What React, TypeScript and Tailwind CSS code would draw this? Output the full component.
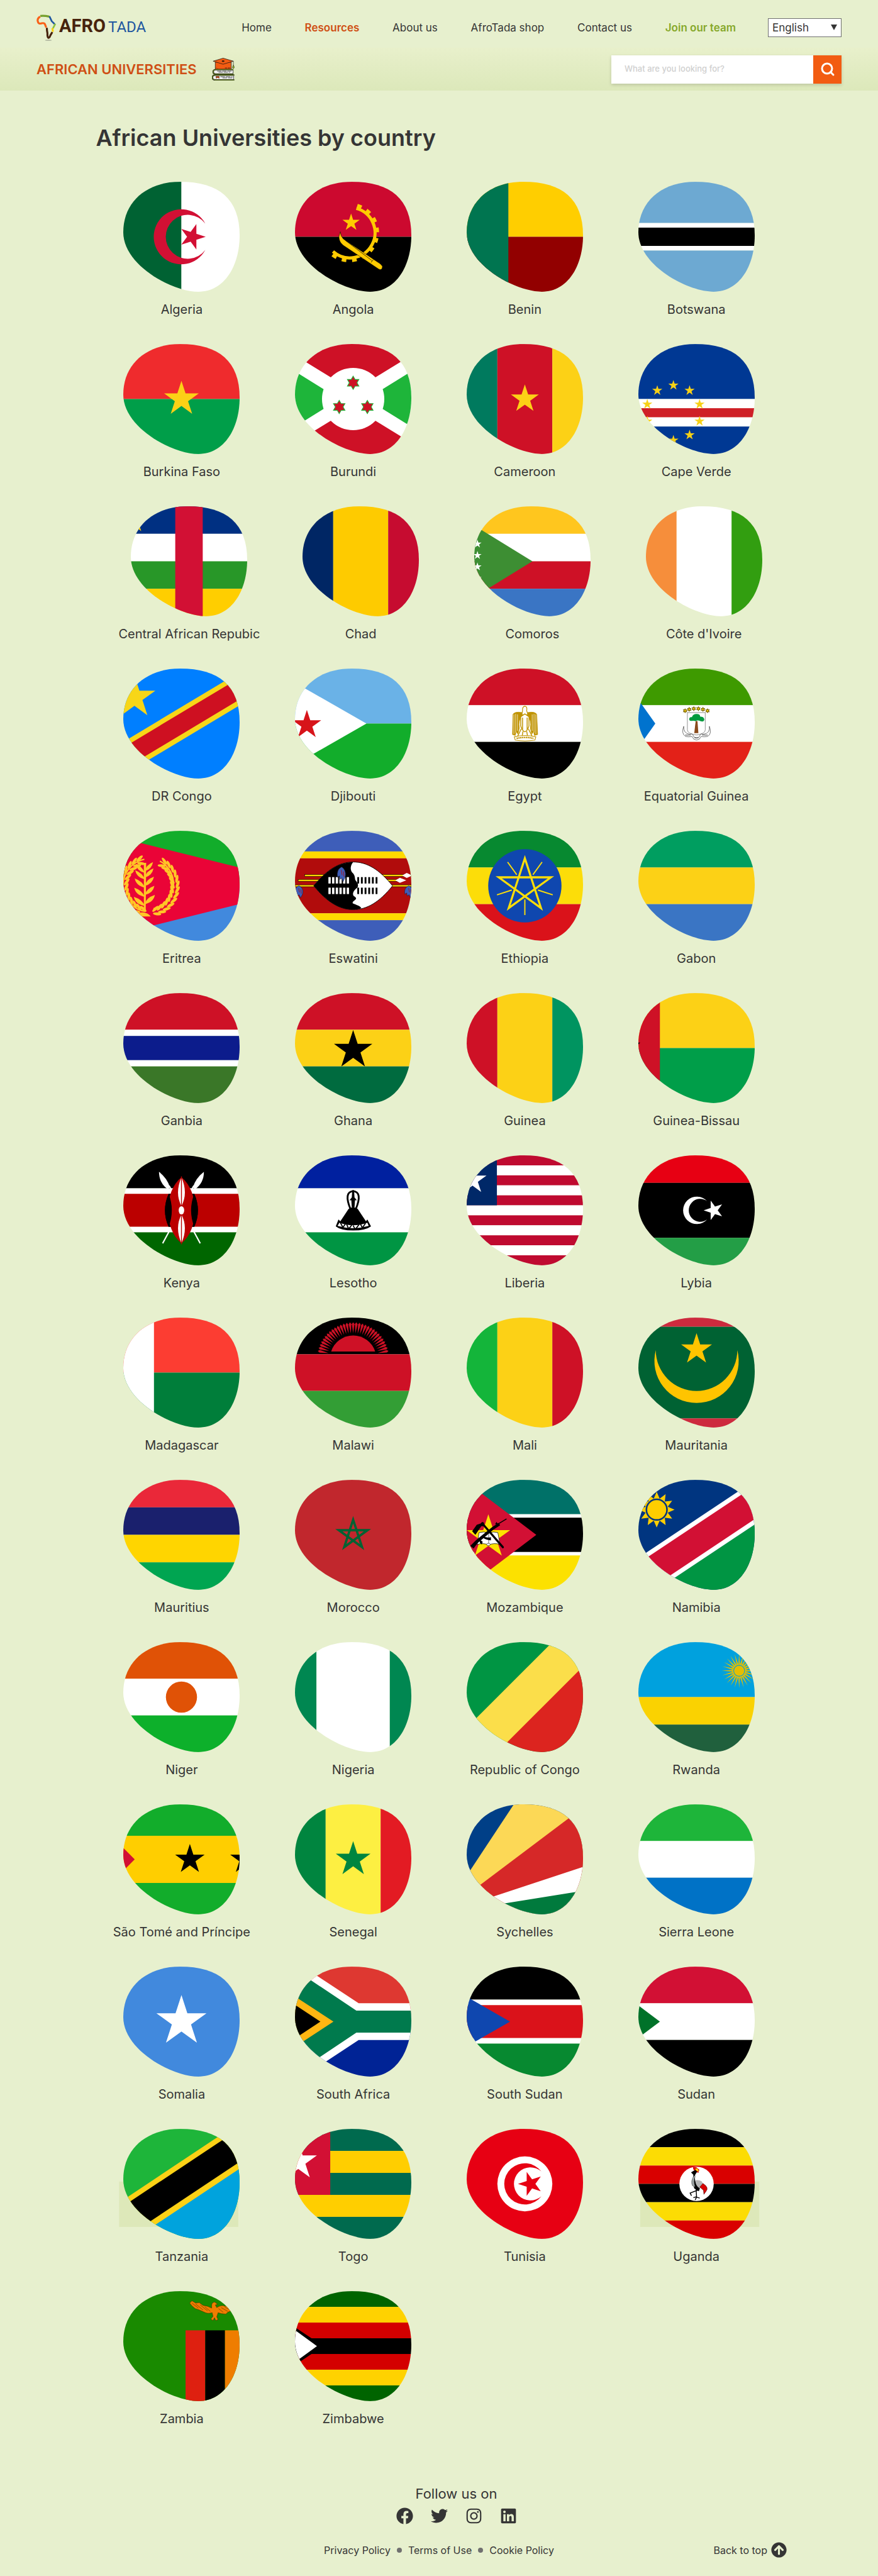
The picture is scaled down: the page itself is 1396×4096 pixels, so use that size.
import React, { useId } from 'react';
import { Search } from 'lucide-react';
import { FaArrowCircleUp, FaFacebook, FaInstagram, FaLinkedin, FaTwitter } from 'react-icons/fa';

/* ---------- drawing helpers (all flags share a 254 x 240 canvas) ---------- */

const BLOB =
  'M0,110 C0,44 50,0 124,0 C209,0 254,38 254,117 C254,183 221,240 164,240 C108,240 0,183 0,110 Z';

const polar = (cx: number, cy: number, r: number, deg: number) => {
  const a = (deg * Math.PI) / 180;
  return `${(cx + r * Math.cos(a)).toFixed(2)},${(cy + r * Math.sin(a)).toFixed(2)}`;
};

function starPoints(cx: number, cy: number, r: number, n = 5, inner = 0.382, start = -90) {
  return Array.from({ length: n * 2 }, (_, i) =>
    polar(cx, cy, i % 2 ? r * inner : r, start + (i * 180) / n),
  ).join(' ');
}

type StarProps = {
  x: number;
  y: number;
  r: number;
  c: string;
  n?: number;
  inner?: number;
  start?: number;
  stroke?: string;
};

const Star = ({ x, y, r, c, n, inner, start, stroke }: StarProps) => (
  <polygon points={starPoints(x, y, r, n, inner, start)} fill={c} stroke={stroke} strokeWidth={stroke ? 1.5 : 0} />
);

const Poly = ({ p, c }: { p: string; c: string }) => <polygon points={p} fill={c} />;

/* Horizontal bands: [end y, colour] */
const H = ({ b }: { b: [number, string][] }) => (
  <>
    {b.map(([end, c], i) => {
      const y = i ? b[i - 1][0] : 0;
      return <rect key={i} x={0} y={y} width={254} height={end - y} fill={c} />;
    })}
  </>
);

/* Vertical bands: [end x, colour] */
const V = ({ b }: { b: [number, string][] }) => (
  <>
    {b.map(([end, c], i) => {
      const x = i ? b[i - 1][0] : 0;
      return <rect key={i} x={x} y={0} width={end - x} height={240} fill={c} />;
    })}
  </>
);

/* Triangle on the hoist side */
const Hoist = ({ apex, half, c }: { apex: number; half: number; c: string }) => (
  <polygon points={`-10,${120 - half} ${apex},120 -10,${120 + half}`} fill={c} />
);

/* Diagonal band between the lines y = a1 - kx and y = a2 - kx */
const Diag = ({ a1, a2, k, c }: { a1: number; a2: number; k: number; c: string }) => (
  <polygon
    points={`-10,${a1 + 10 * k} 270,${a1 - 270 * k} 270,${a2 - 270 * k} -10,${a2 + 10 * k}`}
    fill={c}
  />
);

const pentagram = (cx: number, cy: number, r: number) =>
  [0, 2, 4, 1, 3].map((i) => polar(cx, cy, r, -90 + i * 72)).join(' ');

const range = (n: number) => Array.from({ length: n }, (_, i) => i);

const W = '#ffffff';
const K = '#000000';

/* ---------- emblems ---------- */

const AngolaEmblem = () => (
  <g>
    <g fill="none" stroke="#ffcb00">
      <path d="M134,58 A55,55 0 1 1 83,152" strokeWidth={7} />
      <path d="M136,52 A61,61 0 1 1 78,156" strokeWidth={8} strokeDasharray="10 12.5" />
    </g>
    <path
      d="M99,109 L96,119 C96,131 102,137 112,143 L182,190 Q190,195 191,185 Q189,180 180,175 L106,125 Q99,118 99,109 Z"
      fill="#ffcb00"
      stroke={K}
      strokeWidth={0.8}
    />
    <path d="M110,128 L168,172 M166,176 l5,-6" stroke={K} strokeWidth={1} />
    <Star x={122.5} y={89} r={19.8} c="#ffcb00" />
  </g>
);

const EgyptEagle = () => (
  <g fill="#c09300" stroke="#c09300">
    <path d="M122,92 Q121,83 127,82 Q133,83 131,92 L134,101 L120,101 Z" fill={W} strokeWidth={1.6} />
    <path d="M121,96 Q105,93 101,100 L100,144 L106,146 L108,138 L112,143 L115,130 Q112,112 121,104 Z" strokeWidth={1} />
    <path d="M133,96 Q149,93 153,100 L155,144 L148,146 L146,138 L142,143 L139,130 Q142,112 133,104 Z" strokeWidth={1} />
    <path d="M103,100 V143 M107,99 V140 M111,100 V136 M151,100 V143 M147,99 V140 M143,100 V136" stroke={W} strokeWidth={1} />
    <path d="M118,105 L127,99 L136,105 L136,125 Q133,136 127,138 Q121,136 118,125 Z" fill={W} strokeWidth={2} />
    <path d="M122,107 V133 M132,107 V133" fill="none" strokeWidth={2} />
    <path d="M119,132 L110,150 L119,148 M135,132 L144,150 L135,148 M123,137 L121,148 M131,137 L133,148" fill="none" strokeWidth={2} />
    <path d="M104,149 Q127,143 151,149 L149,156 Q127,160 106,156 Z" fill={W} strokeWidth={1.5} />
    <path d="M109,152.500 Q127,148 146,152.500" fill="none" strokeWidth={3} strokeDasharray="3 1" />
  </g>
);

const GuineaEmblem = () => (
  <g>
    {[102, 111, 121, 131, 141, 151].map((x, i) => (
      <Star key={x} x={x} y={[92, 89, 87.5, 87.5, 89, 92][i]} r={4} c="#ffd700" n={6} inner={0.55} stroke="#7a6300" />
    ))}
    <path d="M107,96 H146 V134 Q146,142 127,145 Q107,142 107,134 Z" fill={W} stroke="#666" strokeWidth={1} />
    <path d="M125,115 L127,114 L129,115 L131,141 H122 Z" fill="#8a4b1c" />
    <path d="M117,114 q-7,1 -6,-5 q1,-4 6,-3 q2,-7 10,-7 q8,0 8,6 q8,0 9,6 q-1,6 -8,4 q-8,-4 -11,0 q-4,-2 -8,-1 Z" fill="#009a3d" />
    <path d="M99,126 Q98,141 111,143 H118 L122,150 Q127,154 132,150 L136,143 H143 Q157,141 155,126 Q161,143 151,148 Q143,150 137,148 L133,154 Q127,158 121,154 L117,148 Q109,150 103,148 Q93,142 99,126 Z" fill={W} stroke="#444" strokeWidth={1} />
    <path d="M103,145 H114 M140,145 H151 M123,151 H131" stroke="#333" strokeWidth={2} strokeDasharray="1.5 1" />
  </g>
);

const EritreaWreath = () => (
  <g fill="#ffc726">
    <path d="M66,170 A56,56 0 0 0 80,66 M48,176 A58,58 0 0 1 46,62" fill="none" stroke="#ffc726" strokeWidth={3} />
    {range(13).map((i) => {
      const a = 75 - i * 11;
      const x = 57 + 56 * Math.cos((a * Math.PI) / 180);
      const y = 120 + 58 * Math.sin((a * Math.PI) / 180);
      return (
        <g key={i} transform={`translate(${x.toFixed(1)} ${y.toFixed(1)}) rotate(${a - 90})`}>
          <ellipse cx={3} cy={-5} rx={9} ry={3.2} transform="rotate(-28)" />
          <ellipse cx={3} cy={5} rx={9} ry={3.2} transform="rotate(22)" />
        </g>
      );
    })}
    {range(13).map((i) => {
      const a = 105 + i * 12;
      const x = 57 + 56 * Math.cos((a * Math.PI) / 180);
      const y = 120 + 58 * Math.sin((a * Math.PI) / 180);
      return (
        <g key={i} transform={`translate(${x.toFixed(1)} ${y.toFixed(1)}) rotate(${a + 90})`}>
          <ellipse cx={3} cy={-5} rx={9} ry={3.2} transform="rotate(-22)" />
          <ellipse cx={3} cy={5} rx={9} ry={3.2} transform="rotate(28)" />
        </g>
      );
    })}
    <path d="M45,70 L50,70 L49,176 L45,176 Z" />
    <path d="M36,187 Q47,172 60,187 Z" />
    {[78, 92, 110, 130, 150].map((y, i) => (
      <g key={y}>
        <path d={`M47,${y + 14} Q${30 - i},${y + 10} ${27 - i},${y - 6} Q${42},${y} 47,${y + 14} Z`} />
        <path d={`M47,${y + 10} Q${62 + i},${y + 6} ${65 + i},${y - 10} Q${50},${y - 4} 47,${y + 10} Z`} />
      </g>
    ))}
  </g>
);

const Feather = ({ x, y, h }: { x: number; y: number; h: number }) => (
  <g transform={`translate(${x} ${y})`}>
    <path
      d={`M0,0 Q-11,${h * 0.2} -8,${h * 0.7} L-4,${h * 0.6} L-3,${h * 0.85} L1,${h * 0.75} L4,${h} Q12,${h * 0.6} 8,${h * 0.25} Q4,0 0,0 Z`}
      fill="#3e5eb9"
      stroke="#1b1f3a"
      strokeWidth={0.8}
    />
    <path d={`M0,${h * 0.2} L2,${h * 0.55} M5,${h * 0.3} L6,${h * 0.65}`} stroke="#b10c0c" strokeWidth={1.2} />
  </g>
);

const EswatiniShield = () => (
  <g>
    {[
      [21, 254, 97.5],
      [7, 230, 108],
      [0, 254, 120],
    ].map(([a, b, y]) => (
      <rect key={y} x={a} y={y - 2} width={b - a} height={4} fill="#ffd900" stroke={K} strokeWidth={0.8} />
    ))}
    <Poly p="234,97.5 244,92 256,97.5 244,103" c={W} />
    <Poly p="219,108 229,102.5 243,108 229,113.5" c={W} />
    <path d="M41,120 C70,84 98,68 127,68 C157,68 184,84 213,120 C184,156 157,172 127,172 C98,172 70,156 41,120 Z" fill={W} stroke={K} strokeWidth={1.2} />
    <path d="M41,120 C70,84 98,68 127,68 C119,78 121,88 127,93 C133,100 129,106 134,110 Q140,118 136,124 C130,128 124,136 128,142 C142,150 124,152 126,158 C134,162 142,163 145,169 Q136,172 127,172 C98,172 70,156 41,120 Z" fill={K} />
    {range(6).map((i) => (
      <g key={i}>
        <rect x={73 + i * 8} y={101} width={5} height={14} fill={W} />
        <rect x={73 + i * 8} y={124} width={5} height={14} fill={W} />
        <rect x={136 + i * 8} y={101} width={4} height={14} fill={K} />
        <rect x={136 + i * 8} y={124} width={4} height={14} fill={K} />
      </g>
    ))}
    <Feather x={101} y={79} h={32} />
    <Feather x={8} y={120} h={26} />
    <Feather x={248} y={120} h={26} />
  </g>
);

const KenyaShield = () => (
  <g>
    <g stroke={W} strokeWidth={3}>
      <path d="M100,66 L168,192 M154,66 L86,192" />
    </g>
    <path d="M78,36 Q78,60 97,74 L102,70 Q96,50 78,36 Z" fill={W} />
    <path d="M176,36 Q176,60 157,74 L152,70 Q158,50 176,36 Z" fill={W} />
    <path d="M99,84 Q83,120 99,156 L109,156 V84 Z M155,84 Q171,120 155,156 H145 V84 Z" fill={K} />
    <path d="M127,48 C166,78 166,162 127,192 C88,162 88,78 127,48 Z" fill="#bb0000" />
    <path d="M155,84 Q141,120 155,156 Q171,120 155,84 Z M99,84 Q113,120 99,156 Q83,120 99,84 Z" fill={K} />
    <path d="M127,48 Q112,82 127,111 Q142,82 127,48 Z M127,192 Q112,158 127,129 Q142,158 127,192 Z" fill={W} />
    <path d="M127,46 V194" stroke="#bb0000" strokeWidth={2} />
    <ellipse cx={127} cy={120} rx={6} ry={9} fill={W} />
  </g>
);

const LesothoHat = () => (
  <g>
    <path d="M121,117 Q106,80 127,78 Q148,80 133,117" fill="none" stroke={K} strokeWidth={4} />
    <path d="M125,76 H129 L130,92 L135,98 H131 L130,113 H124 L123,98 H119 L124,92 Z" fill={K} />
    <path d="M117,117 L127,112 L137,117 L155,144 L158,140 L166,155 Q154,164 127,164 Q100,164 89,155 L95,140 L99,144 Z" fill={K} />
    <path d="M97,147 Q127,158 158,147 L161,154 Q127,164 93,154 Z" fill={W} />
    <path d="M99,147 l5,9 M104,158 l6,-8 M113,151 l4,9 M118,160 l6,-8 M127,153 l4,8 M133,160 l7,-9 M143,150 l4,8 M148,157 l6,-9" stroke={K} strokeWidth={2.4} />
  </g>
);

const MozambiqueEmblem = () => (
  <g>
    <Star x={47.3} y={125} r={50} c="#fce100" />
    <path d="M27,115 Q38,112 48,116 Q58,112 68,115 L73,141 Q60,137 48,142 Q36,137 23,141 Z" fill={W} stroke={K} strokeWidth={1} />
    <path d="M48,116 V142" stroke={K} strokeWidth={0.8} />
    <ellipse cx={47.5} cy={141} rx={4} ry={2.5} fill={W} stroke={K} strokeWidth={0.8} />
    <path d="M34,95 L79,147" stroke={K} strokeWidth={4.5} strokeLinecap="round" />
    <path d="M12,112 L22,98 L31,95 Q34,90 38,94 L38,101 L32,101 L19,120 Z" fill={K} />
    <path d="M8,144 L20,132 L56,103 L70,94 L73,99 L58,109 L24,138 L15,150 Z" fill={K} />
    <path d="M66,98 L87,85" stroke={K} strokeWidth={2} />
    <path d="M36,122 Q42,128 53,125 L53,132 Q43,132 35,126 Z M28,130 L35,135 L33,141 L29,138 Z M62,97 l3,-5 l4,5 Z" fill={K} />
  </g>
);

const UgandaCrane = () => (
  <g>
    <circle cx={127} cy={120} r={37.5} fill={W} />
    <path d="M120,88 L119,83 L127,84 L133,89 L131,96 L124,93 Z" fill="#d90000" />
    <path d="M124,87 L129,86 L132,93 L127,92 Z" fill="#fcdc04" />
    <path d="M121,91 Q127,88 128,94 L124,100 Q122,112 127,122 L135,128 L132,136 L122,130 Q118,118 120,100 L115,95 Z" fill={K} />
    <path d="M122,101 Q113,114 118,124 L124,127 Q120,114 124,104 Z" fill="#9ca3a3" stroke={K} strokeWidth={0.5} />
    <path d="M125,112 Q139,110 142,122 L134,130 Q124,124 125,112 Z" fill="#b5b5b5" />
    <path d="M141,119 Q155,128 148,136 L143,143 L142,134 L134,127 Z" fill="#d90000" stroke={K} strokeWidth={0.6} />
    <path d="M126,130 L127,148 L120,150 M127,149 L134,151 M127,149 L124,155 M131,133 L113,140 L116,146" fill="none" stroke={K} strokeWidth={2} />
  </g>
);

const ZambiaEagle = () => (
  <g fill="#ef7d00" stroke="#4a2c00" strokeWidth={0.8}>
    <path d="M193,30 Q194,24 200,24 L206,29 L201,30 L204,36 Q215,29 222,33 L232,32 Q240,36 238,42 L228,46 L224,50 L214,49 L207,47 L204,56 L207,62 L202,64 L199,58 L196,64 L191,61 L196,55 L194,47 Q184,50 177,46 L166,41 L157,38 L150,32 L145,26 L150,21 L158,26 L166,25 L174,31 L184,33 L193,37 Z" />
    <path d="M150,26 L164,37 M158,28 L174,41 M168,30 L184,43 M178,34 L190,44 M208,38 L218,46 M214,36 L228,44 M222,35 L234,41" fill="none" />
  </g>
);

/* ---------- flags ---------- */

type Country = { name: string; flag: React.ReactNode; shade?: number };

const rows: Country[][] = [
  [
    {
      name: 'Algeria',
      flag: (
        <>
          <V b={[[127, '#006233'], [254, W]]} />
          <path d="M179,91 A60,60 0 1 0 179,149 A48,48 0 1 1 179,91 Z" fill="#d21034" />
          <Star x={150.5} y={120} r={29.4} c="#d21034" start={0} />
        </>
      ),
    },
    { name: 'Angola', flag: <><H b={[[120, '#cc092f'], [240, K]]} /><AngolaEmblem /></> },
    {
      name: 'Benin',
      flag: <><H b={[[120, '#ffce00'], [240, '#920000']]} /><rect width={91} height={240} fill="#007550" /></>,
    },
    {
      name: 'Botswana',
      flag: <H b={[[90, '#6da9d2'], [100, W], [140, K], [150, W], [240, '#6da9d2']]} />,
    },
  ],
  [
    {
      name: 'Burkina Faso',
      flag: <><H b={[[120, '#ef2b2d'], [240, '#009e49']]} /><Star x={127} y={120} r={39.8} c="#fcd116" /></>,
    },
    {
      name: 'Burundi',
      flag: (
        <>
          <rect width={254} height={240} fill={W} />
          <Poly p="-40,0 294,0 127,102.5" c="#ce1126" />
          <Poly p="-40,240 294,240 127,137.5" c="#ce1126" />
          <Poly p="-53,27 97.5,120 -53,213" c="#1eb53a" />
          <Poly p="307,27 156.5,120 307,213" c="#1eb53a" />
          <circle cx={127} cy={120} r={68} fill={W} />
          {[[127, 84.5], [96.6, 137.3], [158, 137.3]].map(([x, y]) => (
            <Star key={x} x={x} y={y} r={14.5} c="#ce1126" n={6} inner={0.577} stroke="#1eb53a" />
          ))}
        </>
      ),
    },
    {
      name: 'Cameroon',
      flag: <><V b={[[67, '#007a5e'], [187, '#ce1126'], [254, '#fcd116']]} /><Star x={127} y={120} r={32} c="#fcd116" /></>,
    },
    {
      name: 'Cape Verde',
      flag: (
        <>
          <H b={[[120, '#003893'], [140, W], [160, '#cf2027'], [180, W], [240, '#003893']]} />
          {range(10).map((i) => {
            const a = ((-90 + i * 36) * Math.PI) / 180;
            return <Star key={i} x={76.5 + 60 * Math.cos(a)} y={150 + 60 * Math.sin(a)} r={11.7} c="#f7d116" />;
          })}
        </>
      ),
    },
  ],
  [
    {
      name: 'Central African Repubic',
      flag: (
        <>
          <H b={[[60, '#003082'], [120, W], [180, '#289728'], [240, '#ffce00']]} />
          <rect x={97} width={60} height={240} fill="#d21034" />
          <Star x={11} y={38} r={20} c="#ffce00" />
        </>
      ),
    },
    { name: 'Chad', flag: <V b={[[67, '#002664'], [187, '#fecb00'], [254, '#c60c30']]} /> },
    {
      name: 'Comoros',
      flag: (
        <>
          <H b={[[60, '#ffc61e'], [120, W], [180, '#ce1126'], [240, '#3a75c4']]} />
          <Poly p="-53,9 127,120 -53,231" c="#3d8e33" />
          {[82, 107, 132, 157].map((y) => <Star key={y} x={7} y={y} r={9.5} c={W} />)}
        </>
      ),
    },
    { name: "Côte d'Ivoire", flag: <V b={[[67, '#f68e3b'], [187, W], [254, '#329e10']]} /> },
  ],
  [
    {
      name: 'DR Congo',
      flag: (
        <>
          <rect width={254} height={240} fill="#007fff" />
          <Diag a1={160} a2={232.5} k={0.6} c="#f7d618" />
          <Diag a1={172.4} a2={220} k={0.6} c="#ce1021" />
          <Star x={24.4} y={63} r={48} c="#f7d618" />
        </>
      ),
    },
    {
      name: 'Djibouti',
      flag: (
        <>
          <H b={[[120, '#6ab2e7'], [240, '#12ad2b']]} />
          <Hoist apex={156} half={95} c={W} />
          <Star x={26} y={123} r={32.8} c="#d7141a" />
        </>
      ),
    },
    { name: 'Egypt', flag: <><H b={[[80, '#ce1126'], [160, W], [240, K]]} /><EgyptEagle /></> },
    {
      name: 'Equatorial Guinea',
      flag: (
        <>
          <H b={[[80, '#3e9a00'], [160, W], [240, '#e32118']]} />
          <Hoist apex={37} half={66} c="#0073ce" />
          <GuineaEmblem />
        </>
      ),
    },
  ],
  [
    {
      name: 'Eritrea',
      flag: (
        <>
          <H b={[[120, '#12ad2b'], [240, '#4189dd']]} />
          <Poly p="-53,4 415,120 -53,236" c="#ea0437" />
          <EritreaWreath />
        </>
      ),
    },
    {
      name: 'Eswatini',
      flag: (
        <>
          <H b={[[45, '#3e5eb9'], [60, '#ffd900'], [180, '#b10c0c'], [195, '#ffd900'], [240, '#3e5eb9']]} />
          <EswatiniShield />
        </>
      ),
    },
    {
      name: 'Ethiopia',
      flag: (
        <>
          <H b={[[80, '#078930'], [160, '#fcdd09'], [240, '#da121a']]} />
          <circle cx={127} cy={120} r={80} fill="#0f47af" />
          <polygon points={pentagram(127, 120, 60)} fill="none" stroke="#fcdd09" strokeWidth={4.5} />
          {range(5).map((i) => (
            <path key={i} d={`M${polar(127, 120, 30, -54 + i * 72)} L${polar(127, 120, 64, -54 + i * 72)}`} stroke="#fcdd09" strokeWidth={2.6} />
          ))}
        </>
      ),
    },
    { name: 'Gabon', flag: <H b={[[80, '#009e60'], [160, '#fcd116'], [240, '#3a75c4']]} /> },
  ],
  [
    {
      name: 'Ganbia',
      flag: <H b={[[80, '#ce1126'], [93.5, W], [146.5, '#0c1c8c'], [160, W], [240, '#3a7728']]} />,
    },
    {
      name: 'Ghana',
      flag: <><H b={[[80, '#ce1126'], [160, '#fcd116'], [240, '#006b3f']]} /><Star x={127} y={124.5} r={44} c={K} /></>,
    },
    { name: 'Guinea', flag: <V b={[[67, '#ce1126'], [187, '#fcd116'], [254, '#009460']]} /> },
    {
      name: 'Guinea-Bissau',
      flag: (
        <>
          <H b={[[120, '#fcd116'], [240, '#009e49']]} />
          <rect width={47} height={240} fill="#ce1126" />
          <Poly p="0,108 4,108 0,112" c={K} />
        </>
      ),
    },
  ],
  [
    {
      name: 'Kenya',
      flag: <><H b={[[72, K], [84, W], [156, '#bb0000'], [168, W], [240, '#006600']]} /><KenyaShield /></>,
    },
    { name: 'Lesotho', flag: <><H b={[[72, '#00209f'], [168, W], [240, '#009543']]} /><LesothoHat /></> },
    {
      name: 'Liberia',
      flag: (
        <>
          <H b={range(11).map((i) => [((i + 1) * 240) / 11, i % 2 ? W : '#bf0a30'] as [number, string])} />
          <rect width={66} height={109} fill="#002868" />
          <Star x={12.8} y={54} r={32} c={W} />
        </>
      ),
    },
    {
      name: 'Lybia',
      flag: (
        <>
          <H b={[[60, '#e70013'], [180, K], [240, '#239e46']]} />
          <path d="M150,100 A30,30 0 1 0 150,140 A25,25 0 1 1 150,100 Z" fill={W} />
          <Star x={164.7} y={120} r={22.2} c={W} start={180} />
        </>
      ),
    },
  ],
  [
    {
      name: 'Madagascar',
      flag: <><H b={[[120, '#fc3d32'], [240, '#007e3a']]} /><rect width={67} height={240} fill={W} /></>,
    },
    {
      name: 'Malawi',
      flag: (
        <>
          <H b={[[80, K], [160, '#ce1126'], [240, '#339e35']]} />
          <path d="M79,74 A50.4,50.4 0 0 1 175,74 Z" fill="#ce1126" />
          {range(31).map((i) => {
            const a = -168 + i * 5.2;
            return (
              <path key={i} d={`M${polar(127, 89, 55, a)} L${polar(127, 89, 75, a - 2.2)} L${polar(127, 89, 79, a)} L${polar(127, 89, 75, a + 2.2)} Z`} fill="#ce1126" />
            );
          })}
        </>
      ),
    },
    { name: 'Mali', flag: <V b={[[67, '#14b53a'], [187, '#fcd116'], [254, '#ce1126']]} /> },
    {
      name: 'Mauritania',
      flag: (
        <>
          <H b={[[20, '#cd2a3e'], [220, '#006233'], [240, '#cd2a3e']]} />
          <path d="M38,71 A92,92 0 1 0 216,71 A89,89 0 0 1 38,71 Z" fill="#ffc400" />
          <Star x={127} y={69.4} r={35.4} c="#ffc400" />
        </>
      ),
    },
  ],
  [
    { name: 'Mauritius', flag: <H b={[[60, '#ea2839'], [120, '#1a206d'], [180, '#ffd500'], [240, '#00a551']]} /> },
    {
      name: 'Morocco',
      flag: (
        <>
          <rect width={254} height={240} fill="#c1272d" />
          <polygon points={pentagram(127, 120, 33)} fill="none" stroke="#006233" strokeWidth={5} />
        </>
      ),
    },
    {
      name: 'Mozambique',
      flag: (
        <>
          <H b={[[75, '#007168'], [82.5, W], [157.5, K], [165, W], [240, '#fce100']]} />
          <Hoist apex={152} half={123} c="#d21034" />
          <MozambiqueEmblem />
        </>
      ),
    },
    {
      name: 'Namibia',
      flag: (
        <>
          <rect width={254} height={240} fill="#003580" />
          <Diag a1={266} a2={600} k={0.666} c="#009543" />
          <Diag a1={170.5} a2={266.5} k={0.666} c={W} />
          <Diag a1={182} a2={255} k={0.666} c="#d21034" />
          <Star x={40} y={65} r={39} c="#ffce00" n={12} inner={0.64} />
          <circle cx={40} cy={65} r={22.5} fill="#ffce00" stroke="#003580" strokeWidth={3.5} />
        </>
      ),
    },
  ],
  [
    {
      name: 'Niger',
      flag: <><H b={[[80, '#e05206'], [160, W], [240, '#0db02b']]} /><circle cx={127} cy={120} r={34} fill="#e05206" /></>,
    },
    { name: 'Nigeria', flag: <V b={[[47, '#008751'], [207, W], [254, '#008751']]} /> },
    {
      name: 'Republic of Congo',
      flag: (
        <>
          <rect width={254} height={240} fill="#009543" />
          <Diag a1={187} a2={310} k={1} c="#fbde4a" />
          <Diag a1={307} a2={600} k={1} c="#dc241f" />
        </>
      ),
    },
    {
      name: 'Rwanda',
      flag: (
        <>
          <H b={[[120, '#00a1de'], [180, '#fad201'], [240, '#20603d']]} />
          <Star x={220} y={62.5} r={38} c="#e5be01" n={24} inner={0.36} />
          <circle cx={220} cy={62.5} r={12} fill="#e5be01" stroke="#00a1de" strokeWidth={1.5} />
        </>
      ),
    },
  ],
  [
    {
      name: 'São Tomé and Príncipe',
      flag: (
        <>
          <H b={[[68.5, '#12ad2b'], [171.5, '#ffce00'], [240, '#12ad2b']]} />
          <Hoist apex={25} half={35} c="#d21034" />
          <Star x={145.4} y={120} r={33.8} c={K} />
          <Star x={265.6} y={120} r={33.8} c={K} />
        </>
      ),
    },
    {
      name: 'Senegal',
      flag: <><V b={[[67, '#00853f'], [187, '#fdef42'], [254, '#e31b23']]} /><Star x={127} y={120} r={39.8} c="#00853f" /></>,
    },
    {
      name: 'Sychelles',
      flag: (
        <>
          <rect width={254} height={240} fill="#003f87" />
          <Poly p="-55,239 103,0 307,0 307,239" c="#fcd856" />
          <Poly p="-53,238 263,0 307,0 307,239" c="#d62828" />
          <Poly p="-53,238 307,119 307,239" c={W} />
          <Poly p="-53,238 307,180 307,250 -53,250" c="#007a3d" />
        </>
      ),
    },
    { name: 'Sierra Leone', flag: <H b={[[80, '#1eb53a'], [160, W], [240, '#0072c6']]} /> },
  ],
  [
    {
      name: 'Somalia',
      flag: <><rect width={254} height={240} fill="#4189dd" /><Star x={127} y={119.5} r={57.5} c={W} /></>,
    },
    {
      name: 'South Africa',
      flag: (
        <>
          <H b={[[120, '#de3831'], [240, '#002395']]} />
          <Poly p="-20,-25 139,80 260,80 260,160 139,160 -20,265" c={W} />
          <Poly p="-20,-7 134,96 260,96 260,144 134,144 -20,247" c="#007a4d" />
          <Poly p="-20,52 84,120 -20,188" c="#ffb612" />
          <Poly p="-20,70 55.5,120 -20,170" c={K} />
        </>
      ),
    },
    {
      name: 'South Sudan',
      flag: (
        <>
          <H b={[[72, K], [84, W], [156, '#da121a'], [168, W], [240, '#078930']]} />
          <Hoist apex={94.7} half={60} c="#0f47af" />
        </>
      ),
    },
    {
      name: 'Sudan',
      flag: <><H b={[[80, '#d21034'], [160, W], [240, K]]} /><Hoist apex={47} half={43} c="#007229" /></>,
    },
  ],
  [
    {
      name: 'Tanzania',
      shade: -9,
      flag: (
        <>
          <rect width={254} height={240} fill="#1eb53a" />
          <Diag a1={255} a2={600} k={0.666} c="#00a3dd" />
          <Diag a1={155} a2={256} k={0.666} c="#fcd116" />
          <Diag a1={168.5} a2={241} k={0.666} c={K} />
        </>
      ),
    },
    {
      name: 'Togo',
      flag: (
        <>
          <H b={[[48, '#006a4e'], [96, '#ffce00'], [144, '#006a4e'], [192, '#ffce00'], [240, '#006a4e']]} />
          <rect width={77} height={144} fill="#d21034" />
          <Star x={7.2} y={71} r={42.7} c={W} />
        </>
      ),
    },
    {
      name: 'Tunisia',
      flag: (
        <>
          <rect width={254} height={240} fill="#e70013" />
          <circle cx={127} cy={120} r={60} fill={W} />
          <path d="M163,93 A45,45 0 1 0 163,147 A36,36 0 1 1 163,93 Z" fill="#e70013" />
          <Star x={139.5} y={120} r={27.5} c="#e70013" start={180} />
        </>
      ),
    },
    {
      name: 'Uganda',
      shade: 4,
      flag: (
        <>
          <H b={[[40, K], [80, '#fcdc04'], [120, '#d90000'], [160, K], [200, '#fcdc04'], [240, '#d90000']]} />
          <UgandaCrane />
        </>
      ),
    },
  ],
  [
    {
      name: 'Zambia',
      flag: (
        <>
          <rect width={254} height={240} fill="#198a00" />
          <rect x={136} y={85.5} width={43} height={160} fill="#de2010" />
          <rect x={179} y={85.5} width={43} height={160} fill={K} />
          <rect x={222} y={85.5} width={43} height={160} fill="#ef7d00" />
          <ZambiaEagle />
        </>
      ),
    },
    {
      name: 'Zimbabwe',
      flag: (
        <>
          <H b={['#006400', '#ffd200', '#d40000', K, '#d40000', '#ffd200', '#006400'].map((c, i) => [((i + 1) * 240) / 7, c] as [number, string])} />
          <Poly p="-10,72 62,120 -10,168" c={K} />
          <Hoist apex={48} half={42.5} c={W} />
        </>
      ),
    },
  ],
];

function CountryCard({ name, flag, shade }: Country) {
  const id = useId();
  return (
    <li>
      <a href="#" className="flex flex-col items-center">
        <svg viewBox="0 0 254 240" className="h-[175px] w-[185px] overflow-visible" aria-hidden="true">
          <clipPath id={id}>
            <path d={BLOB} />
          </clipPath>
          {shade !== undefined && <rect x={shade} y={115} width={260} height={99} fill="#dde8b9" />}
          <g clipPath={`url(#${id})`}>{flag}</g>
        </svg>
        <span className="mt-3.5 text-[20px] leading-[28px] whitespace-nowrap">{name}</span>
      </a>
    </li>
  );
}

/* ---------- header ---------- */

const AfricaMark = () => (
  <svg viewBox="0 0 132 178" className="h-[43px] w-8" fill="none" strokeWidth={13} strokeLinejoin="round" aria-hidden="true">
    <path d="M68,88 L69,106 Q73,122 72,138 Q74,154 80,154 Q88,150 92,136 L104,116" stroke="#47230d" />
    <path d="M26,14 Q6,26 10,44 Q14,66 36,58 Q54,54 58,66 L66,86" stroke="#f96218" transform="translate(-2 0)" />
    <path d="M25,10 Q48,6 84,14" stroke="#76a02c" />
    <path d="M85,12 L100,44 L120,64" stroke="#1f57a0" strokeWidth={11} />
    <path d="M124,62 L108,92" stroke="#8bbf3f" strokeWidth={11} />
    <path d="M104,90 L108,114" stroke="#fdd000" strokeWidth={12} />
    <ellipse cx={78} cy={170} rx={22} ry={4} fill="#b5bba4" />
  </svg>
);

const BooksMark = () => (
  <svg viewBox="0 0 150 150" className="size-9" strokeLinejoin="round" aria-hidden="true">
    <path d="M22,28 H128 V76 H22 Z" fill="#f25c12" stroke="#111" strokeWidth={3} />
    <path d="M74,2 L142,22 L74,42 L8,22 Z" fill="#f25c12" stroke="#111" strokeWidth={3} />
    <ellipse cx={74} cy={22} rx={9} ry={5} fill="#3a1c08" />
    <path d="M142,22 V48" stroke="#111" strokeWidth={2.5} />
    <path d="M142,46 L149,64 L142,72 L135,64 Z" fill="#86a82a" stroke="#111" strokeWidth={2} />
    <path d="M28,72 h2 M36,72 h3 M28,64 h2 M86,67 h14 M104,67 h18" stroke="#111" strokeWidth={3} />
    <path d="M142,78 H22 Q8,80 8,93 Q8,106 22,108 H142" fill="#f3f3f3" stroke="#111" strokeWidth={9} />
    <path d="M142,78 H22 Q8,80 8,93 Q8,106 22,108 H142" fill="none" stroke="#86a82a" strokeWidth={4} />
    <path d="M34,88 H132 M44,95 H120" stroke="#555" strokeWidth={4} strokeDasharray="28 6" />
    <path d="M148,114 H18 Q3,116 3,130 Q3,144 18,146 H148" fill="#f3f3f3" stroke="#111" strokeWidth={9} />
    <path d="M148,114 H18 Q3,116 3,130 Q3,144 18,146 H148" fill="none" stroke="#86a82a" strokeWidth={4} />
    <path d="M26,122 H48 V136 L37,130 L28,136 Z" fill="#c9430b" stroke="#333" strokeWidth={2} />
    <path d="M56,125 H136 M70,133 H136" stroke="#111" strokeWidth={3} strokeDasharray="30 6" />
    <path d="M140,82 V104 M144,119 V141" stroke="#111" strokeWidth={3} />
  </svg>
);

const navItems = [
  { label: 'Home', style: '' },
  { label: 'Resources', style: 'font-semibold text-[#cf4f14]' },
  { label: 'About us', style: '' },
  { label: 'AfroTada shop', style: '' },
  { label: 'Contact us', style: '' },
  { label: 'Join our team', style: 'font-semibold text-[#86a82a]' },
];

function Header() {
  return (
    <header>
      <div className="flex h-[76px] items-center px-[58px] pt-3">
        <a href="#" className="flex items-start" aria-label="Afro Tada home">
          <AfricaMark />
          <span className="ml-1 flex items-baseline gap-1 font-['Roboto',sans-serif] text-[29px] leading-9">
            <span className="font-bold text-[#47230d]">AFRO</span>
            <span className="text-[24px] text-[#1f57a0]">TADA</span>
          </span>
        </a>
        <nav className="mr-[51px] ml-[152px] flex flex-1 items-center justify-between text-[17px] leading-6">
          {navItems.map(({ label, style }) => (
            <a key={label} href="#" className={style}>
              {label}
            </a>
          ))}
        </nav>
        <div className="relative">
          <select
            aria-label="Language"
            className="h-[30px] w-[117px] appearance-none border border-[#707070] bg-white pl-1.5 text-[17px] leading-6 outline-none"
          >
            <option>English</option>
          </select>
          <svg viewBox="0 0 10 9" className="pointer-events-none absolute top-2.5 right-[7px] h-[9px] w-2.5" aria-hidden="true">
            <path d="M0,0 H10 L5,9 Z" fill="#353535" />
          </svg>
        </div>
      </div>
      <div className="flex h-[68px] items-center justify-between bg-linear-to-b from-[#e8f0cb] to-[#dce8ba] px-[58px]">
        <div className="flex items-center gap-6">
          <p className="text-[22px] leading-8 font-semibold text-[#cf4f14]">AFRICAN UNIVERSITIES</p>
          <BooksMark />
        </div>
        <form className="flex h-[45px] w-[366px] shadow-[0_2px_5px_rgba(0,0,0,0.16)]" onSubmit={(e) => e.preventDefault()}>
          <input
            type="search"
            aria-label="Search"
            placeholder="What are you looking for?"
            className="min-w-0 flex-1 bg-white pl-[21px] text-[13px] font-medium outline-none placeholder:text-[#d0d0d0]"
          />
          <button type="submit" aria-label="Search" className="flex w-[45px] items-center justify-center bg-[#f25c12] text-white">
            <Search size={24} strokeWidth={3} />
          </button>
        </form>
      </div>
    </header>
  );
}

/* ---------- footer ---------- */

const socials = [
  { label: 'Facebook', Icon: FaFacebook },
  { label: 'Twitter', Icon: FaTwitter },
  { label: 'Instagram', Icon: FaInstagram },
  { label: 'LinkedIn', Icon: FaLinkedin },
];

const Dot = () => <span className="size-2 rounded-full bg-[#707070]" />;

function Footer() {
  return (
    <footer className="pt-[50px] pb-[30px]">
      <div className="flex flex-col items-center pl-[55px]">
        <p className="text-[22px] leading-7">Follow us on</p>
        <div className="mt-2 flex gap-7">
          {socials.map(({ label, Icon }) => (
            <a key={label} href="#" aria-label={label}>
              <Icon size={27} />
            </a>
          ))}
        </div>
      </div>
      <div className="mt-7 grid grid-cols-[1fr_auto_1fr] items-center px-[145px] text-[16px] leading-6">
        <div className="col-start-2 flex items-center gap-2.5">
          <a href="#">Privacy Policy</a>
          <Dot />
          <a href="#">Terms of Use</a>
          <Dot />
          <a href="#">Cookie Policy</a>
        </div>
        <a href="#" className="flex items-center gap-1.5 justify-self-end">
          Back to top
          <FaArrowCircleUp size={25} />
        </a>
      </div>
    </footer>
  );
}

export default function App() {
  return (
    <div className="min-h-screen bg-[#e7f0ce] font-['Inter',sans-serif] text-[#353535]">
      <Header />
      <main className="mx-auto max-w-[1091px] pt-[51px]">
        <h1 className="mb-[46px] text-[36px] leading-[48px] font-semibold">African Universities by country</h1>
        {rows.map((row) => (
          <ul
            key={row[0].name}
            className={
              row[0].name.startsWith('Central')
                ? '-mr-3 mb-[41px] ml-3 grid grid-cols-4'
                : 'mb-[41px] grid grid-cols-4'
            }
          >
            {row.map((country) => (
              <CountryCard key={country.name} {...country} />
            ))}
          </ul>
        ))}
      </main>
      <Footer />
    </div>
  );
}
